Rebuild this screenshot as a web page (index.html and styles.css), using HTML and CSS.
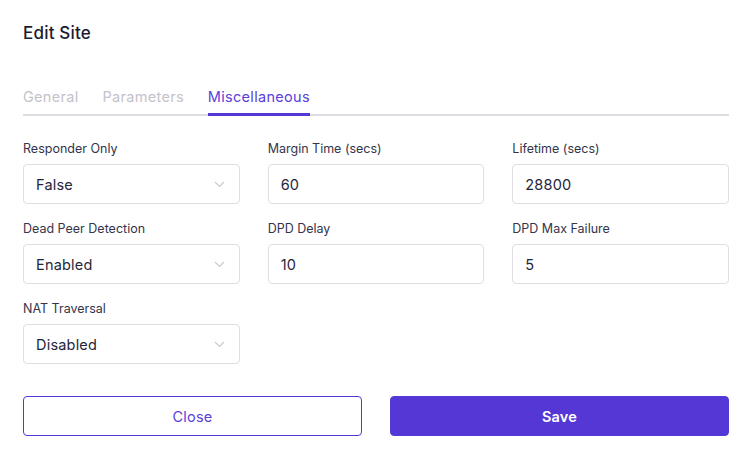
FILE: index.html
```html
<!DOCTYPE html>
<html>
<head>
<meta charset="utf-8">
<link rel="stylesheet" href="styles.css">
</head>
<body>
<div class="modal">
  <h1 class="title">Edit Site</h1>
  <nav class="tabs">
    <span class="tab">General</span>
    <span class="tab">Parameters</span>
    <span class="tab active">Miscellaneous</span>
  </nav>
  <div class="grid">
    <div class="field">
      <label class="label">Responder Only</label>
      <div class="control select">False<svg class="chev" width="11" height="7" viewBox="0 0 11 7"><path d="M1 1l4.5 4.5L10 1" fill="none" stroke="#c9c9d1" stroke-width="1.2"/></svg></div>
    </div>
    <div class="field">
      <label class="label">Margin Time (secs)</label>
      <div class="control">60</div>
    </div>
    <div class="field">
      <label class="label">Lifetime (secs)</label>
      <div class="control">28800</div>
    </div>
    <div class="field">
      <label class="label">Dead Peer Detection</label>
      <div class="control select">Enabled<svg class="chev" width="11" height="7" viewBox="0 0 11 7"><path d="M1 1l4.5 4.5L10 1" fill="none" stroke="#c9c9d1" stroke-width="1.2"/></svg></div>
    </div>
    <div class="field">
      <label class="label">DPD Delay</label>
      <div class="control">10</div>
    </div>
    <div class="field">
      <label class="label">DPD Max Failure</label>
      <div class="control">5</div>
    </div>
    <div class="field">
      <label class="label">NAT Traversal</label>
      <div class="control select">Disabled<svg class="chev" width="11" height="7" viewBox="0 0 11 7"><path d="M1 1l4.5 4.5L10 1" fill="none" stroke="#c9c9d1" stroke-width="1.2"/></svg></div>
    </div>
  </div>
  <div class="actions">
    <button class="btn btn-outline">Close</button>
    <button class="btn btn-primary">Save</button>
  </div>
</div>
</body>
</html>
```
FILE: styles.css
```css
* { box-sizing: border-box; }
body {
  margin: 0;
  background: #fff;
  font-family: Inter, "Noto Sans", sans-serif;
  color: #24243a;
}
.modal {
  width: 729px;
  padding: 21px 0 0 23px;
}
.title {
  margin: 0;
  font-size: 17px;
  line-height: 24px;
  font-weight: 500;
  color: #1c1b30;
  letter-spacing: 0.2px;
}
.tabs {
  margin-top: 42px;
  display: flex;
  gap: 24px;
  border-bottom: 2px solid #dcdce2;
}
.tab {
  font-size: 14.5px;
  line-height: 20px;
  padding-bottom: 7px;
  color: #c3c3cb;
  letter-spacing: 0.3px;
}
.tab.active {
  color: #5b40dc;
  border-bottom: 3px solid #5537d6;
  margin-bottom: -2px;
  padding-bottom: 6px;
}
.grid {
  margin-top: 24px;
  display: grid;
  grid-template-columns: repeat(3, 1fr);
  column-gap: 28px;
  row-gap: 16px;
}
.field {
  display: flex;
  flex-direction: column;
  gap: 6px;
}
.label {
  font-size: 12.5px;
  line-height: 18px;
  color: #34344a;
  letter-spacing: 0;
}
.control {
  height: 40px;
  border: 1px solid #dedee4;
  border-radius: 4px;
  padding: 0 14px 0 12px;
  display: flex;
  align-items: center;
  justify-content: space-between;
  font-size: 14.5px;
  color: #26263a;
  letter-spacing: 0.2px;
}
.chev { display: block; }
.actions {
  margin-top: 32px;
  display: grid;
  grid-template-columns: 1fr 1fr;
  gap: 28px;
}
.btn {
  height: 40px;
  border-radius: 4px;
  font-family: Inter, "Noto Sans", sans-serif;
  font-size: 14.5px;
  cursor: pointer;
  letter-spacing: 0.2px;
}
.btn-outline {
  background: #fff;
  border: 1px solid #5537d6;
  color: #5b40dc;
}
.btn-primary {
  background: #5537d5;
  border: 1px solid #5537d5;
  color: #fff;
  font-weight: 600;
}
```
